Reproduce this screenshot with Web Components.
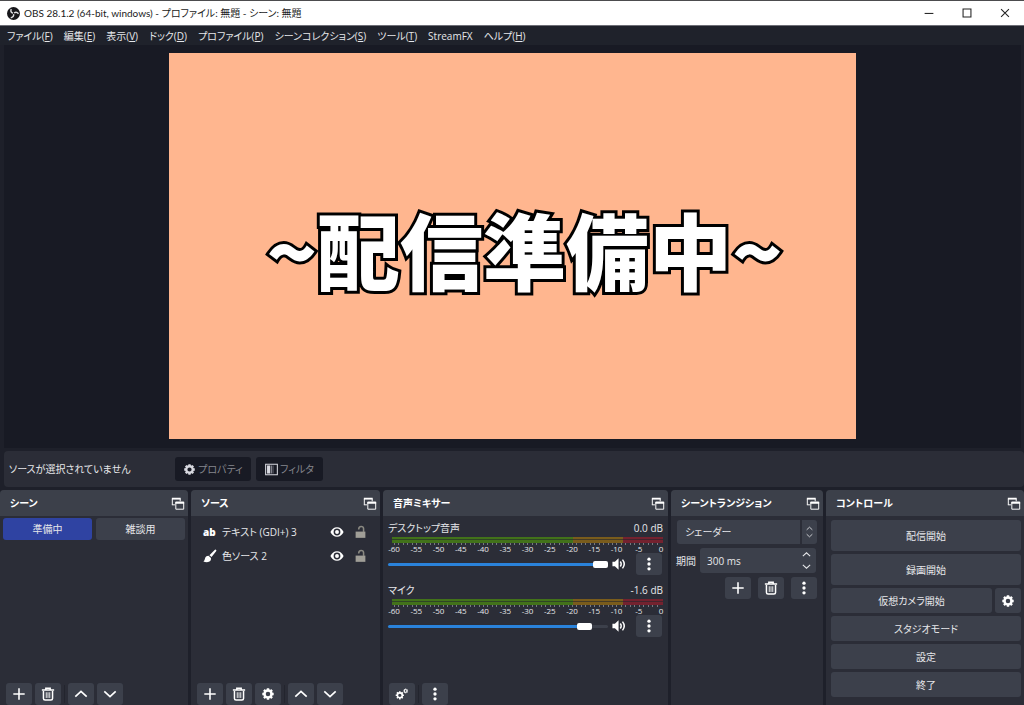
<!DOCTYPE html>
<html lang="ja">
<head>
<meta charset="utf-8">
<title>OBS 28.1.2</title>
<style>
  html, body { margin: 0; height: 100%; background: #1e202a; }
  body { font: 10px/16px "Open Sans", "Noto Sans CJK JP", sans-serif; font-feature-settings: "palt"; color: #e6e7ea; }
</style>
</head>
<body>
<obs-app></obs-app>
<script>
const define = (name, html, setup) => {
  const tpl = document.createElement('template');
  tpl.innerHTML = html;
  customElements.define(name, class extends HTMLElement {
    constructor() {
      super();
      this.attachShadow({ mode: 'open' }).append(tpl.content.cloneNode(true));
    }
    connectedCallback() { if (setup) setup(this, this.shadowRoot); }
  });
};

const gear = (x, y, r, w, t) => `<circle cx="${x}" cy="${y}" r="${r}" fill="none" stroke="currentColor" stroke-width="${w}"/>
  <g stroke="currentColor" stroke-width="${w}">${[0, 45, 90, 135].map(a => {
    const o = r + t, i = r;
    return `<path transform="rotate(${a} ${x} ${y})" d="M${x} ${y - o}V${y - i}M${x} ${y + i}V${y + o}"/>`;
  }).join('')}</g>`;

const ICONS = {
  plus: '<path d="M8 1.500v13M1.500 8h13" stroke="currentColor" stroke-width="1.8"/>',
  trash: '<path d="M1 3.500h14M5.500 3V1.500h5V3M2.800 4.500V13q0 1.800 1.800 1.800h6.800q1.800 0 1.800-1.800V4.500" fill="none" stroke="currentColor" stroke-width="1.7"/><path d="M6 6v6.500M8 6v6.500M10 6v6.500" stroke="currentColor" stroke-width="1"/>',
  up: '<path d="M1.500 11 8 5l6.500 6" fill="none" stroke="currentColor" stroke-width="1.9"/>',
  down: '<path d="M1.500 5 8 11l6.500-6" fill="none" stroke="currentColor" stroke-width="1.9"/>',
  dots: '<g fill="currentColor"><circle cx="8" cy="2.500" r="1.900"/><circle cx="8" cy="8" r="1.900"/><circle cx="8" cy="13.500" r="1.900"/></g>',
  gear: gear(8, 8, 4, 2.8, 2.5),
  gears: gear(5.5, 9.500, 2.800, 1.8, 1.9) + gear(12.200, 4.500, 1.500, 1.100, 1.200),
  filter: '<path d="M.8 1.500h14.400v13H.8z" fill="none" stroke="#d8d9e0" stroke-width="1.3"/><path d="M2.500 3h4v10h-4z" fill="#d8d9e0"/><path d="M7.500 3h1.500v10H7.500z" fill="#8f909a"/><path d="M10 3h1v10h-1z" fill="#4b4d58"/>',
  float: '<path d="M1.500 9.500V2.500h9v3M5.500 14.500v-8h9v8zM1 9.500h3.500" fill="none" stroke="currentColor" stroke-width="1.1"/><path d="M1 1.500h10v2H1zM5 6h10v2.200H5z" fill="currentColor"/>',
  brush: '<path d="M14.800.8q1 .8.2 1.800L9.800 9.200 7.300 7 13.300 1q.8-.8 1.500-.2zM6.300 7.800l2.800 2.500q.6 4.700-4.600 4.700-2.500 0-4-.8 1.500-.8 1.700-3Q2.800 7.800 6.300 7.800z" fill="currentColor"/>',
  eye: '<path d="M.5 8Q3 2.500 8 2.500T15.500 8q-2.500 5.500-7.500 5.500T.5 8z" fill="currentColor"/><circle cx="8" cy="8" r="3.900" fill="#2b2d37"/><circle cx="8" cy="8" r="2.200" fill="currentColor"/>',
  lock: '<path d="M2 7.500h12v7.700H2z" fill="#a09e97"/><path d="M11.800 8V4Q11.800 1.300 8.800 1.300T5.800 4.800" fill="none" stroke="#8a8982" stroke-width="1.900"/>',
  speaker: '<path d="M.5 5.500h2.800L7.500 1.500v13L3.300 10.500H.5z" fill="currentColor"/><path d="M9.500 5.200q2 2.800 0 5.600M12 3q4 5 0 10" fill="none" stroke="currentColor" stroke-width="1.700"/>',
  logo: '<circle cx="8" cy="8" r="8" fill="#17171a"/><g fill="none" stroke="#dedee0" stroke-width="1.700"><path d="M5.200 2.500q-1.500 3.800 2 5.200"/><path d="M5.200 2.500q-1.500 3.800 2 5.200" transform="rotate(120 8 8)"/><path d="M5.200 2.500q-1.500 3.800 2 5.200" transform="rotate(240 8 8)"/></g>',
  min: '<path d="M3 8.500h10" stroke="#222" stroke-width="1.200"/>',
  max: '<path d="M3.500 3.500h9v9h-9z" fill="none" stroke="#222" stroke-width="1.200"/>',
  close: '<path d="M3.500 3.500l9 9M12.500 3.500l-9 9" stroke="#222" stroke-width="1.200"/>'
};

define('obs-icon', `<style>
  :host { display: inline-flex; width: 14px; height: 14px; flex: none; }
  svg { width: 100%; height: 100%; }
</style><svg viewBox="0 0 16 16" aria-hidden="true"></svg>`,
  (el, root) => { root.querySelector('svg').innerHTML = ICONS[el.getAttribute('name')]; });

define('obs-button', `<style>
  :host { display: flex; height: 22px; min-width: 0; }
  button { all: unset; box-sizing: border-box; flex: 1; min-width: 0; display: flex; align-items: center; justify-content: center;
    gap: 2px; border-radius: 3px; background: var(--button, #3c404b); color: inherit; white-space: nowrap; }
  button:hover { filter: brightness(1.15); }
  :host([square]) { width: 26px; flex: none; color: #fff; }
  :host([dim]) { --button: #181a24; color: #85868d; }
  :host([active]) { --button: #2f43a2; }
</style><button type="button"><slot></slot></button>`,
  (el, root) => {
    const label = el.getAttribute('label');
    if (label) root.querySelector('button').setAttribute('aria-label', label);
  });

define('obs-titlebar', `<style>
  :host { display: flex; align-items: center; height: 26px; box-sizing: border-box; background: #fff; color: #1a1a1a;
    border-top: 1px solid #4c4c4e; border-bottom: 1px solid #6d6e76; font-family: Lato, "Noto Sans CJK JP", sans-serif; }
  .logo { width: 13px; height: 13px; margin: 0 4px 0 7px; }
  h1 { font: inherit; margin: 0; flex: 1; white-space: nowrap; }
  button { all: unset; width: 38px; height: 24px; display: flex; align-items: center; justify-content: center; }
</style>
<obs-icon class="logo" name="logo"></obs-icon>
<h1><slot></slot></h1>
<button aria-label="最小化"><obs-icon name="min"></obs-icon></button>
<button aria-label="最大化"><obs-icon name="max"></obs-icon></button>
<button aria-label="閉じる"><obs-icon name="close"></obs-icon></button>`);

define('obs-menubar', `<style>
  :host { display: block; background: #1f222b; }
  nav { display: flex; gap: 11px; height: 19px; align-items: center; padding-left: 7px; }
  a { color: inherit; text-decoration: none; white-space: nowrap; }
</style>
<nav>
  <a href="#file">ファイル(<u>F</u>)</a><a href="#edit">編集(<u>E</u>)</a><a href="#view">表示(<u>V</u>)</a>
  <a href="#dock">ドック(<u>D</u>)</a><a href="#profile">プロファイル(<u>P</u>)</a><a href="#scenes">シーンコレクション(<u>S</u>)</a>
  <a href="#tools">ツール(<u>T</u>)</a><a href="#fx">StreamFX</a><a href="#help">ヘルプ(<u>H</u>)</a>
</nav>`);

define('obs-preview', `<style>
  :host { display: flex; justify-content: center; box-sizing: border-box; min-height: 0; padding: 8px 0 9px; margin: 0 3px 0 4px; background: #181a24; }
  .canvas { height: 100%; aspect-ratio: 16 / 9; display: flex; align-items: center; justify-content: center; background: #ffb68f;
    overflow: hidden; box-sizing: border-box; padding: 4px 0 0 24px; }
  .text { font: 900 83px/100px "Noto Sans CJK JP", sans-serif; font-feature-settings: normal; color: #fff; white-space: nowrap;
    -webkit-text-stroke: 6px #000; paint-order: stroke fill; stroke-linejoin: round; }
</style><div class="canvas"><div class="text"><slot></slot></div></div>`);

define('obs-context', `<style>
  :host { display: flex; align-items: center; height: 36px; margin: 3px 0 3px 4px; padding-left: 5px; border-radius: 4px; background: #2b2d37; }
  span { width: 166px; white-space: nowrap; }
  obs-button { height: 24px; }
  .prop { width: 76px; margin-right: 5px; }
  .filt { width: 67px; }
  obs-icon { color: #d8d9e0; width: 13px; height: 13px; }
</style>
<span>ソースが選択されていません</span>
<obs-button class="prop" dim><obs-icon name="gear"></obs-icon>プロパティ</obs-button>
<obs-button class="filt" dim><obs-icon name="filter"></obs-icon>フィルタ</obs-button>`);

define('obs-dock', `<style>
  :host { display: flex; flex-direction: column; min-width: 0; background: #2b2d37; border-radius: 4px 4px 0 0; overflow: hidden; }
  header { display: flex; align-items: center; justify-content: space-between; height: 26px; padding: 0 3px 0 10px; background: #3c404a; color: #fff; }
  h2 { font: inherit; font-weight: 600; margin: 0; white-space: nowrap; }
  header obs-icon { height: 15px; }
  .body { flex: 1; min-height: 0; }
  .tools { display: flex; gap: 3px; padding: 0 6px; }
  ::slotted(hr) { width: 0; height: 18px; margin: 2px 0; border: 0; border-left: 1px solid #23252e; }
</style>
<header><h2></h2><obs-icon name="float"></obs-icon></header>
<div class="body"><slot></slot></div>
<div class="tools"><slot name="tool"></slot></div>`,
  (el, root) => { root.querySelector('h2').textContent = el.getAttribute('heading'); });

define('obs-scenes', `<style>
  :host { display: grid; grid-template-columns: 1fr 1fr; gap: 4px; padding: 2px 3px; }
</style>
<obs-button active>準備中</obs-button><obs-button>雑談用</obs-button>`);

define('obs-source', `<style>
  :host { display: flex; align-items: center; height: 24px; padding: 0 13px 0 12px; }
  .kind { width: 13px; display: flex; margin-right: 6px; color: #fff; }
  .kind b { line-height: 14px; font-weight: 800; }
  .name { flex: 1; white-space: nowrap; }
  .eye { color: #fff; margin-right: 10px; }
  .lock { width: 13px; }
</style>
<span class="kind"></span><span class="name"><slot></slot></span>
<obs-icon class="eye" name="eye"></obs-icon><obs-icon class="lock" name="lock"></obs-icon>`,
  (el, root) => {
    root.querySelector('.kind').innerHTML = el.getAttribute('kind') === 'text' ? '<b>ab</b>' : '<obs-icon name="brush"></obs-icon>';
  });

define('obs-channel', `<style>
  :host { display: block; height: 62px; padding: 0 5px; }
  .head { display: flex; justify-content: space-between; height: 16px; padding-top: 4px; }
  .meter { height: 6px; margin: 1px 0 0 4px;
    background: linear-gradient(#0000 2px, #22252d99 2px 3px, #0000 3px),
      linear-gradient(90deg, #42721a 66.7%, #7a5c1c 66.7% 85.3%, #74222f 85.3%); }
  .ticks { height: 2px; margin: 0 2px 0 6px; background: repeating-linear-gradient(90deg, #777982 0 1px, #0000 1px calc(100% / 60)); }
  .scale { display: flex; justify-content: space-between; height: 8px; margin: 0 2px 0 6px; font-size: 8px; line-height: 7px; }
  .scale span { display: flex; justify-content: center; width: 0; }
  .row { display: flex; align-items: center; height: 22px; }
  input { -webkit-appearance: none; appearance: none; flex: 1; min-width: 0; height: 8px; margin: 0; background: none; }
  input::-webkit-slider-runnable-track { height: 3px; border-radius: 2px; background: linear-gradient(90deg, #2a82da var(--level), #3c404b var(--level)); }
  input::-webkit-slider-thumb { -webkit-appearance: none; width: 15px; height: 7px; margin-top: -2px; border-radius: 2px; background: #fff; }
  .speaker { margin: 0 10px 0 4px; color: #fff; }
  obs-button { margin-right: 1px; }
</style>
<div class="head"><label for="vol"></label><output for="vol"></output></div>
<div class="meter"></div><div class="ticks"></div><div class="scale"></div>
<div class="row"><input id="vol" type="range" min="0" max="100"><obs-icon class="speaker" name="speaker"></obs-icon>
<obs-button square label="詳細"><obs-icon name="dots"></obs-icon></obs-button></div>`,
  (el, root) => {
    root.querySelector('label').textContent = el.getAttribute('name');
    root.querySelector('output').textContent = el.getAttribute('db');
    const vol = root.querySelector('input');
    const paint = () => vol.style.setProperty('--level', vol.value + '%');
    vol.value = el.getAttribute('value');
    vol.addEventListener('input', paint);
    paint();
    let marks = '';
    for (let v = -60; v <= 0; v += 5) marks += `<span>${v}</span>`;
    root.querySelector('.scale').innerHTML = marks;
  });

define('obs-transitions', `<style>
  :host { display: block; padding: 4px 6px; }
  .field { position: relative; flex: 1; min-width: 0; display: flex; border-radius: 3px; background: #3c404b; }
  select, input { all: unset; box-sizing: border-box; width: 100%; height: 24px; line-height: 24px; padding-left: 8px; white-space: nowrap; }
  .arrows { position: absolute; right: 0; top: 0; bottom: 0; width: 17px; display: flex; flex-direction: column; align-items: center; justify-content: center;
    pointer-events: none; border-left: 2px solid #2b2d37; box-sizing: border-box; }
  .arrows obs-icon { width: 7px; height: 7px; }
  .time { display: flex; align-items: center; gap: 3px; margin: 4px 1px 4px -1px; }
  label { width: 21px; white-space: nowrap; }
  .time input { height: 25px; padding-left: 7px; }
  .time .arrows { border: 0; gap: 3px; width: 20px; }
  .time .arrows obs-icon { width: 9px; height: 9px; }
  .tools { display: flex; justify-content: flex-end; gap: 7px; }
</style>
<div class="field"><select aria-label="シーントランジション"><option>シェーダー</option></select>
  <span class="arrows"><obs-icon name="up"></obs-icon><obs-icon name="down"></obs-icon></span></div>
<div class="time"><label for="dur">期間</label><div class="field"><input id="dur" type="text" value="300 ms">
  <span class="arrows"><obs-icon name="up"></obs-icon><obs-icon name="down"></obs-icon></span></div></div>
<div class="tools">
  <obs-button square label="追加"><obs-icon name="plus"></obs-icon></obs-button>
  <obs-button square label="削除"><obs-icon name="trash"></obs-icon></obs-button>
  <obs-button square label="メニュー"><obs-icon name="dots"></obs-icon></obs-button>
</div>`);

define('obs-controls', `<style>
  :host { display: flex; flex-direction: column; gap: 3px; padding: 4px 3px 0 5px; }
  obs-button { height: 25px; }
  .big { height: 31px; }
  .pair { display: flex; gap: 3px; }
  .pair :first-child { flex: 1; }
</style>
<obs-button class="big">配信開始</obs-button>
<obs-button class="big">録画開始</obs-button>
<div class="pair"><obs-button>仮想カメラ開始</obs-button><obs-button square label="仮想カメラ設定"><obs-icon name="gear"></obs-icon></obs-button></div>
<obs-button>スタジオモード</obs-button>
<obs-button>設定</obs-button>
<obs-button>終了</obs-button>`);

define('obs-app', `<style>
  :host { display: grid; grid-template-rows: auto auto minmax(0, 1fr) auto 215px; height: 100vh; overflow: hidden; }
  .docks { display: grid; gap: 3px; min-width: 0;
    grid-template-columns: minmax(0, 188fr) minmax(0, 189fr) minmax(0, 285fr) minmax(0, 152fr) minmax(0, 198fr); }
  .list { padding-top: 4px; }
</style>
<obs-titlebar>OBS 28.1.2 (64-bit, windows) - プロファイル: 無題 - シーン: 無題</obs-titlebar>
<obs-menubar></obs-menubar>
<obs-preview>~配信準備中~</obs-preview>
<obs-context></obs-context>
<main class="docks">
  <obs-dock heading="シーン"><obs-scenes></obs-scenes>
    <obs-button slot="tool" square label="追加"><obs-icon name="plus"></obs-icon></obs-button>
    <obs-button slot="tool" square label="削除"><obs-icon name="trash"></obs-icon></obs-button>
    <hr slot="tool">
    <obs-button slot="tool" square label="上へ"><obs-icon name="up"></obs-icon></obs-button>
    <obs-button slot="tool" square label="下へ"><obs-icon name="down"></obs-icon></obs-button>
  </obs-dock>
  <obs-dock heading="ソース"><div class="list"><obs-source kind="text">テキスト (GDI+) 3</obs-source><obs-source kind="color">色ソース 2</obs-source></div>
    <obs-button slot="tool" square label="追加"><obs-icon name="plus"></obs-icon></obs-button>
    <obs-button slot="tool" square label="削除"><obs-icon name="trash"></obs-icon></obs-button>
    <obs-button slot="tool" square label="プロパティ"><obs-icon name="gear"></obs-icon></obs-button>
    <hr slot="tool">
    <obs-button slot="tool" square label="上へ"><obs-icon name="up"></obs-icon></obs-button>
    <obs-button slot="tool" square label="下へ"><obs-icon name="down"></obs-icon></obs-button>
  </obs-dock>
  <obs-dock heading="音声ミキサー">
    <obs-channel name="デスクトップ音声" db="0.0 dB" value="100"></obs-channel>
    <obs-channel name="マイク" db="-1.6 dB" value="92"></obs-channel>
    <obs-button slot="tool" square label="オーディオの詳細"><obs-icon name="gears"></obs-icon></obs-button>
    <hr slot="tool">
    <obs-button slot="tool" square label="メニュー"><obs-icon name="dots"></obs-icon></obs-button>
  </obs-dock>
  <obs-dock heading="シーントランジション"><obs-transitions></obs-transitions></obs-dock>
  <obs-dock heading="コントロール"><obs-controls></obs-controls></obs-dock>
</main>`);
</script>
</body>
</html>
